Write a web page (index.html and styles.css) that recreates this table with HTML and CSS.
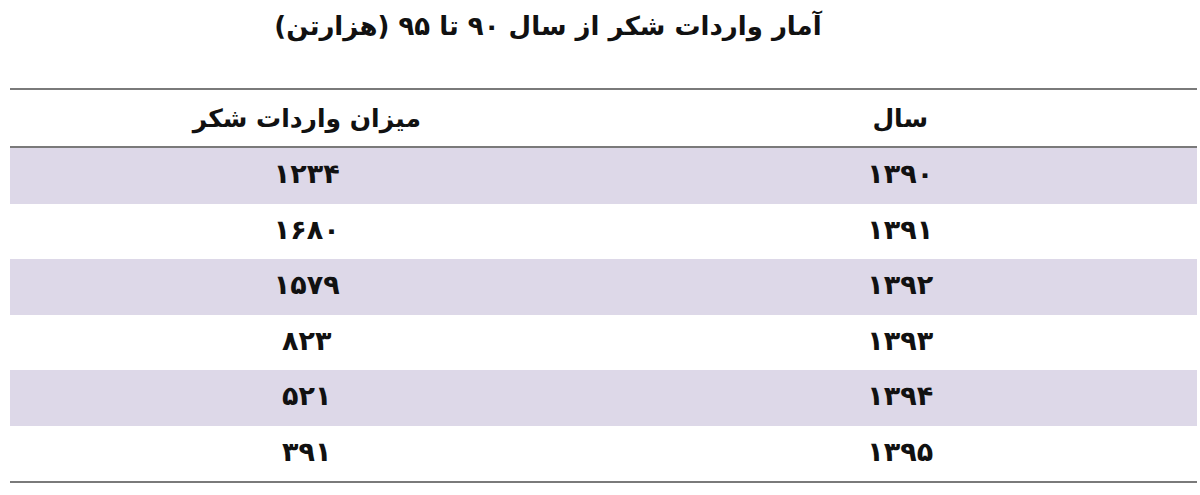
FILE: index.html
```html
<!DOCTYPE html>
<html lang="fa" dir="rtl">
<head>
<meta charset="utf-8">
<link rel="stylesheet" href="styles.css">
</head>
<body>
<div class="page">
  <h1 class="title">آمار واردات شکر از سال ۹۰ تا ۹۵ (هزارتن)</h1>
  <div class="table">
    <div class="row head"><div class="cell">سال</div><div class="cell">میزان واردات شکر</div></div>
    <div class="row odd"><div class="cell num">۱۳۹۰</div><div class="cell num">۱۲۳۴</div></div>
    <div class="row"><div class="cell num">۱۳۹۱</div><div class="cell num">۱۶۸۰</div></div>
    <div class="row odd"><div class="cell num">۱۳۹۲</div><div class="cell num">۱۵۷۹</div></div>
    <div class="row"><div class="cell num">۱۳۹۳</div><div class="cell num">۸۲۳</div></div>
    <div class="row odd"><div class="cell num">۱۳۹۴</div><div class="cell num">۵۲۱</div></div>
    <div class="row"><div class="cell num">۱۳۹۵</div><div class="cell num">۳۹۱</div></div>
  </div>
</div>
</body>
</html>
```
FILE: styles.css
```css
html, body {
  margin: 0;
  padding: 0;
  background: #ffffff;
}
body {
  width: 1200px;
  height: 495px;
  overflow: hidden;
  font-family: "DejaVu Sans", "Noto Sans", sans-serif;
  color: #111111;
}
.page {
  display: flex;
  flex-direction: column;
}
.title {
  margin: 0;
  height: 88px;
  box-sizing: border-box;
  padding: 6px 104px 0 0;
  font-size: 26px;
  font-weight: bold;
  text-align: center;
  line-height: 40px;
}
.table {
  margin: 0 3px 0 10px;
  border-top: 2px solid #7a7a7a;
  border-bottom: 2px solid #7a7a7a;
  display: flex;
  flex-direction: column;
}
.row {
  display: grid;
  grid-template-columns: 1fr 1fr;
  height: 55.5px;
  align-items: center;
}
.row.head {
  height: 56px;
  border-bottom: 2px solid #7a7a7a;
}
.row.odd {
  background: #ddd8e8;
}
.cell {
  text-align: center;
  font-size: 25px;
  font-weight: bold;
  line-height: 1;
}
.cell.num {
  font-size: 27px;
  letter-spacing: 4px;
  padding-bottom: 4px;
}
```
